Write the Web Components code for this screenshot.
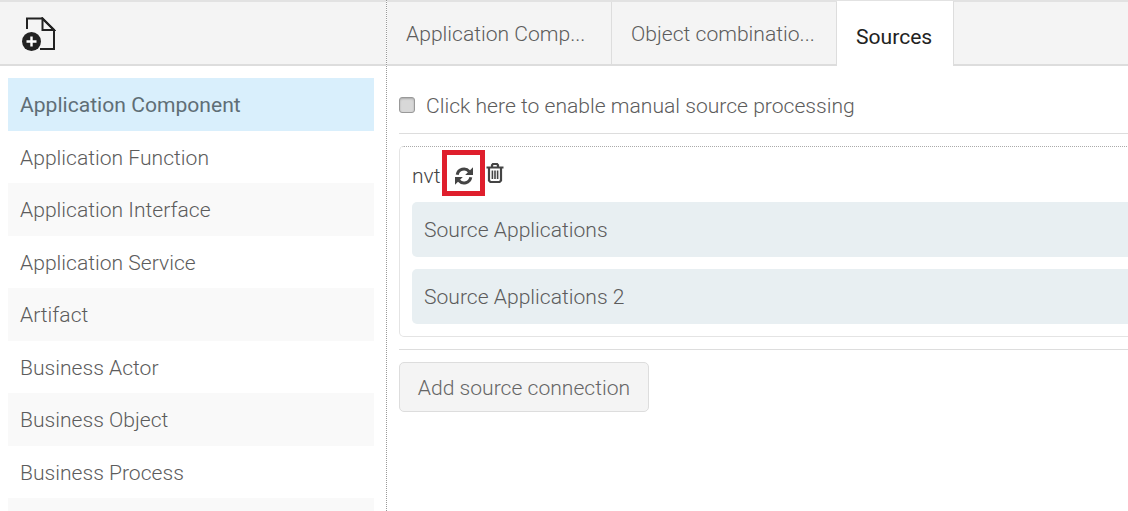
<!DOCTYPE html>
<html>
<head>
<meta charset="utf-8">
<title>Sources</title>
<style>
  html, body { margin: 0; height: 100%; overflow: hidden; background: #fff; }
  body { font-family: Roboto, "Liberation Sans", sans-serif; font-weight: 300; color: #5c5c5c; font-size: 21.1px; }
</style>
</head>
<body>
<app-shell>
  <side-list slot="side">
    <list-item active>Application Component</list-item>
    <list-item>Application Function</list-item>
    <list-item odd>Application Interface</list-item>
    <list-item>Application Service</list-item>
    <list-item odd>Artifact</list-item>
    <list-item>Business Actor</list-item>
    <list-item odd>Business Object</list-item>
    <list-item>Business Process</list-item>
    <list-item odd>&nbsp;</list-item>
  </side-list>
  <tab-bar slot="tabs">
    <tab-item>Application Comp...</tab-item>
    <tab-item>Object combinatio...</tab-item>
    <tab-item active>Sources</tab-item>
  </tab-bar>
  <sources-panel slot="main"></sources-panel>
</app-shell>

<script>
class AppShell extends HTMLElement {
  constructor() {
    super();
    this.attachShadow({ mode: "open" });
    this.shadowRoot.innerHTML = `
      <style>
        :host {
          display: grid;
          grid-template-columns: 387px 1fr;
          height: 511px;
          width: 1128px;
          overflow: hidden;
        }
        .left {
          border-right: 1px dotted #999;
          display: flex;
          flex-direction: column;
        }
        .right {
          min-width: 0;
          display: flex;
          flex-direction: column;
        }
        .tool {
          height: 62px;
          flex: none;
          background: #f4f4f4;
          border-top: 2px solid #e2e2e2;
          border-bottom: 2px solid #ddd;
          padding-left: 22px;
          display: flex;
          align-items: center;
        }
        .tool svg { margin-top: 2px; }
        svg { display: block; }
      </style>
      <div class="left">
        <div class="tool">
          <svg width="34" height="34" viewBox="0 0 34 34">
            <path d="M5 12V1.5H20.5L32 13V32H18" fill="none" stroke="#222" stroke-width="2"/>
            <path d="M20.5 1.5V13H32Z" fill="none" stroke="#222" stroke-width="2"/>
            <circle cx="9.5" cy="24.5" r="9.5" fill="#222"/>
            <path d="M4.5 24.5H14.5M9.5 19.5V29.5" stroke="#fff" stroke-width="2.4"/>
          </svg>
        </div>
        <slot name="side"></slot>
      </div>
      <div class="right">
        <slot name="tabs"></slot>
        <slot name="main"></slot>
      </div>
    `;
  }
}

class SideList extends HTMLElement {
  constructor() {
    super();
    this.attachShadow({ mode: "open" });
    this.shadowRoot.innerHTML = `
      <style>
        :host {
          display: flex;
          flex-direction: column;
          padding: 12px 12px 0 8px;
        }
      </style>
      <slot></slot>
    `;
  }
}

class ListItem extends HTMLElement {
  constructor() {
    super();
    this.attachShadow({ mode: "open" });
    this.shadowRoot.innerHTML = `
      <style>
        :host {
          display: block;
          height: 52.5px;
          line-height: 53px;
          padding-left: 12px;
          flex: none;
        }
        :host([odd]) { background: #f9f9f9; }
        :host([active]) { background: #d9effc; font-weight: 400; color: #5f6e76; }
      </style>
      <slot></slot>
    `;
  }
}

class TabBar extends HTMLElement {
  constructor() {
    super();
    this.attachShadow({ mode: "open" });
    this.shadowRoot.innerHTML = `
      <style>
        :host {
          display: flex;
          height: 62px;
          flex: none;
          background: #f4f4f4;
          border-top: 2px solid #e2e2e2;
          border-bottom: 2px solid #ddd;
        }
      </style>
      <slot></slot>
    `;
  }
}

class TabItem extends HTMLElement {
  constructor() {
    super();
    this.attachShadow({ mode: "open" });
    this.shadowRoot.innerHTML = `
      <style>
        :host {
          display: block;
          box-sizing: border-box;
          width: 225px;
          padding-left: 19px;
          line-height: 63px;
          height: 62px;
          border-right: 1px solid #ddd;
          white-space: nowrap;
        }
        :host([active]) {
          width: 117px;
          background: #fff;
          color: #222;
          font-weight: 400;
          height: 65px;
          line-height: 71px;
          margin-top: -1px;
          z-index: 1;
        }
      </style>
      <slot></slot>
    `;
  }
}

class SourcesPanel extends HTMLElement {
  constructor() {
    super();
    this.attachShadow({ mode: "open" });
    this.shadowRoot.innerHTML = `
      <style>
        :host {
          display: block;
          padding: 0 0 0 12px;
          overflow: hidden;
        }
        .manual {
          height: 56px;
          padding-top: 11px;
          display: flex;
          align-items: center;
          gap: 11px;
          border-bottom: 1px solid #ddd;
          margin-right: -20px;
        }
        .box {
          box-sizing: border-box;
          width: 16px;
          height: 16px;
          margin-top: -1px;
          border: 1px solid #999;
          border-radius: 3px;
          background: #d8d8d8;
          box-shadow: inset 0 1px 2px #aaa;
        }
        .card {
          margin: 12px -20px 0 0;
          border: 1px solid #e4e4e4;
          border-top: 1px dotted #aaa;
          border-radius: 5px;
          padding: 0 12px 12px;
        }
        .head {
          display: flex;
          align-items: center;
          height: 55px;
        }
        .nvt { margin-top: 2px; color: #444; }
        .mark {
          width: 33px;
          height: 36px;
          margin: -3px 0 0 1px;
          border: 5px solid #df1f2d;
          display: flex;
          align-items: center;
          justify-content: center;
          background: #fff;
        }
        .mark svg { margin: 6px 0 0 2px; }
        .trash { margin: -3px 0 0 1px; }
        svg { display: block; }
        .rule {
          margin: 12px -20px 12px 0;
          border-top: 1px solid #ddd;
        }
        button {
          font: inherit;
          color: #666;
          height: 50px;
          width: 250px;
          padding: 0;
          background: #f4f4f4;
          border: 1px solid #ddd;
          border-radius: 5px;
          display: block;
        }
      </style>
      <div class="manual"><span class="box"></span><span>Click here to enable manual source processing</span></div>
      <div class="card">
        <div class="head">
          <span class="nvt">nvt</span>
          <span class="mark">
            <svg width="20" height="20" viewBox="0 0 20 20">
              <path d="M3.2 8.7A6.9 6.9 0 0 1 15.2 5.4" fill="none" stroke="#444" stroke-width="3"/>
              <path d="M19 1.2V9H11.2Z" fill="#444"/>
              <path d="M16.8 11.3A6.9 6.9 0 0 1 4.8 14.6" fill="none" stroke="#444" stroke-width="3"/>
              <path d="M1 18.8V11H8.8Z" fill="#444"/>
            </svg>
          </span>
          <span class="trash">
            <svg width="18" height="20" viewBox="0 0 18 20">
              <path d="M0.5 4.5H17.5M6 4V2.2L7 1H11L12 2.2V4" fill="none" stroke="#444" stroke-width="2.2"/>
              <path d="M3 5V17.5L4.5 19H13.5L15 17.5V5" fill="none" stroke="#444" stroke-width="2.2"/>
              <path d="M6.4 7.5V16M9 7.5V16M11.6 7.5V16" stroke="#444" stroke-width="1.6"/>
            </svg>
          </span>
        </div>
        <source-row>Source Applications</source-row>
        <source-row>Source Applications 2</source-row>
      </div>
      <div class="rule"></div>
      <button>Add source connection</button>
    `;
  }
}

class SourceRow extends HTMLElement {
  constructor() {
    super();
    this.attachShadow({ mode: "open" });
    this.shadowRoot.innerHTML = `
      <style>
        :host {
          display: block;
          height: 55px;
          line-height: 56px;
          padding-left: 12px;
          margin-bottom: 12px;
          background: #e8eff2;
          border-radius: 5px;
        }
        :host(:last-child) { margin-bottom: 0; }
      </style>
      <slot></slot>
    `;
  }
}

customElements.define("app-shell", AppShell);
customElements.define("side-list", SideList);
customElements.define("list-item", ListItem);
customElements.define("tab-bar", TabBar);
customElements.define("tab-item", TabItem);
customElements.define("sources-panel", SourcesPanel);
customElements.define("source-row", SourceRow);
</script>
</body>
</html>
